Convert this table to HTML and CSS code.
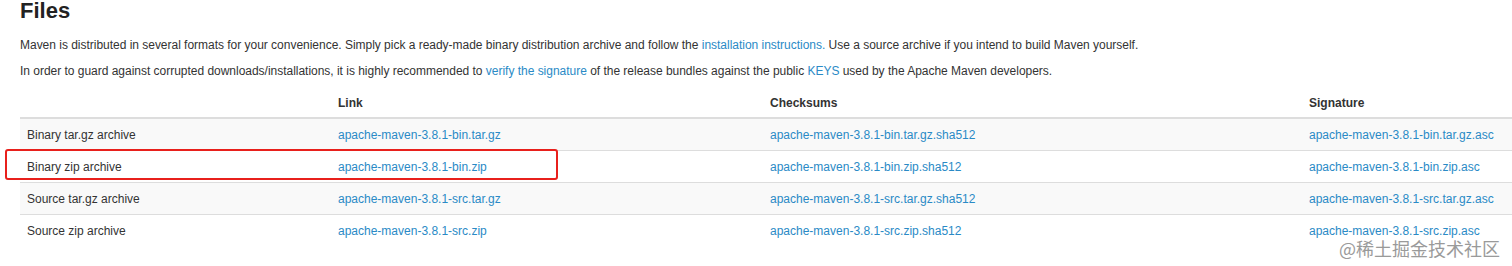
FILE: index.html
```html
<!DOCTYPE html>
<html>
<head>
<meta charset="utf-8">
<link rel="stylesheet" href="styles.css">
</head>
<body>
<div class="page">
  <h2 class="title">Files</h2>
  <p class="para">Maven is distributed in several formats for your convenience. Simply pick a ready-made binary distribution archive and follow the <a href="#">installation instructions.</a> Use a source archive if you intend to build Maven yourself.</p>
  <p class="para">In order to guard against corrupted downloads/installations, it is highly recommended to <a href="#">verify the signature</a> of the release bundles against the public <a href="#">KEYS</a> used by the Apache Maven developers.</p>
  <div class="table-wrap">
    <table class="files">
      <colgroup>
        <col class="c1"><col class="c2"><col class="c3"><col class="c4">
      </colgroup>
      <thead>
        <tr><th></th><th>Link</th><th>Checksums</th><th>Signature</th></tr>
      </thead>
      <tbody>
        <tr><td>Binary tar.gz archive</td><td><a href="#">apache-maven-3.8.1-bin.tar.gz</a></td><td><a href="#">apache-maven-3.8.1-bin.tar.gz.sha512</a></td><td><a href="#">apache-maven-3.8.1-bin.tar.gz.asc</a></td></tr>
        <tr><td>Binary zip archive</td><td><a href="#">apache-maven-3.8.1-bin.zip</a></td><td><a href="#">apache-maven-3.8.1-bin.zip.sha512</a></td><td><a href="#">apache-maven-3.8.1-bin.zip.asc</a></td></tr>
        <tr><td>Source tar.gz archive</td><td><a href="#">apache-maven-3.8.1-src.tar.gz</a></td><td><a href="#">apache-maven-3.8.1-src.tar.gz.sha512</a></td><td><a href="#">apache-maven-3.8.1-src.tar.gz.asc</a></td></tr>
        <tr><td>Source zip archive</td><td><a href="#">apache-maven-3.8.1-src.zip</a></td><td><a href="#">apache-maven-3.8.1-src.zip.sha512</a></td><td><a href="#">apache-maven-3.8.1-src.zip.asc</a></td></tr>
      </tbody>
    </table>
    <div class="highlight"></div>
  </div>
  <div class="watermark">@稀土掘金技术社区</div>
</div>
</body>
</html>
```
FILE: styles.css
```css
html, body {
  margin: 0;
  padding: 0;
  background: #fff;
}
body {
  font-family: "Liberation Sans", Arial, sans-serif;
  font-size: 12px;
  color: #333;
  overflow: hidden;
}
.page {
  position: relative;
  padding-left: 20px;
  height: 266px;
}
a {
  color: #2a8ac6;
  text-decoration: none;
}
.title {
  margin: 0;
  font-size: 22px;
  line-height: 22px;
  font-weight: bold;
  color: #222;
  padding-top: 0;
}
.para {
  margin: 17px 0 0 0;
  line-height: 12px;
  letter-spacing: -0.02px;
}
.para + .para {
  margin-top: 14px;
}
.table-wrap {
  position: relative;
  margin-top: 11px;
}
.files {
  width: 1492px;
  border-collapse: collapse;
  table-layout: fixed;
}
.c1 { width: 311px; }
.c2 { width: 432px; }
.c3 { width: 539px; }
.c4 { width: 210px; }
.files th {
  text-align: left;
  font-weight: bold;
  padding: 0 7px;
  height: 29px;
  line-height: 12px;
  border-bottom: 2px solid #ddd;
  color: #333;
}
.files td {
  padding: 0 7px;
  height: 31px;
  line-height: 12px;
  border-top: 1px solid #ddd;
  white-space: nowrap;
}
.files thead + tbody tr:first-child td {
  border-top: 0;
}
.files tbody tr:nth-child(odd) td {
  background: #f9f9f9;
}
.highlight {
  position: absolute;
  left: -15px;
  top: 61px;
  width: 549px;
  height: 27px;
  border: 2.5px solid #e8201c;
  border-radius: 3px;
}
.watermark {
  position: absolute;
  right: 12px;
  top: 239px;
  font-family: "Noto Sans CJK SC", sans-serif;
  font-size: 18px;
  line-height: 18px;
  color: #9a9a9a;
  text-shadow: 0 0 1px #fff;
}
```
